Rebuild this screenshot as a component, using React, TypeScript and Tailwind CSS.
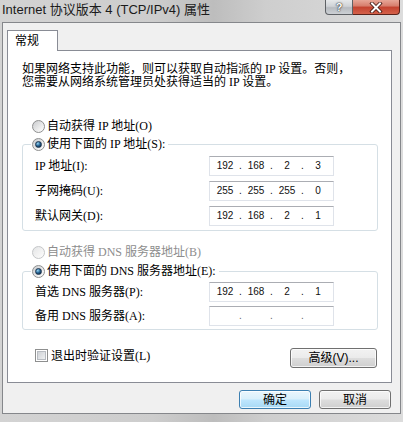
import React from "react";

const sim = "font-['Liberation_Serif','Noto_Sans_CJK_SC',serif]";
const ui = "font-['Liberation_Sans','Noto_Sans_CJK_SC',sans-serif]";

function Radio({ checked, disabled }: { checked?: boolean; disabled?: boolean }) {
  return (
    <span
      className={
        disabled
          ? "flex h-[13px] w-[13px] shrink-0 items-center justify-center rounded-full border border-[#c4c6c8] bg-[linear-gradient(135deg,#e4e5e6,#f6f6f6_70%,#ffffff)]"
          : "flex h-[13px] w-[13px] shrink-0 items-center justify-center rounded-full border border-[#8e8f8f] bg-[linear-gradient(135deg,#c9cbce,#eeeeee_65%,#ffffff)]"
      }
    >
      {checked && (
        <span className="h-[7px] w-[7px] rounded-full border border-[#1c3550] bg-[radial-gradient(circle_at_35%_30%,#9bd6f2,#2a6a9a_45%,#0d2640_85%)]" />
      )}
    </span>
  );
}

function IpBox({ v }: { v?: string[] }) {
  const vals = v ?? ["", "", "", ""];
  return (
    <div
      className={
        "flex h-[20px] w-[125px] items-center border border-[#dfe3ea] border-t-[#abadb3] bg-white pl-[2px] text-[10px] leading-[12px] " +
        ui +
        (v ? " text-[#111]" : " text-[#666]")
      }
    >
      <span className="w-[26px] text-center">{vals[0]}</span>
      <span className="w-[5px] text-center">.</span>
      <span className="w-[26px] text-center">{vals[1]}</span>
      <span className="w-[5px] text-center">.</span>
      <span className="w-[26px] text-center">{vals[2]}</span>
      <span className="w-[5px] text-center">.</span>
      <span className="w-[26px] text-center">{vals[3]}</span>
    </div>
  );
}

function Row({ label, v }: { label: string; v?: string[] }) {
  return (
    <div className="flex h-[20px] items-center">
      <span className={"w-[186px] pl-[12px] text-[12px] text-black " + sim}>{label}</span>
      <IpBox v={v} />
    </div>
  );
}

function Btn({ children, primary, w }: { children: React.ReactNode; primary?: boolean; w: string }) {
  return (
    <div
      className={
        (primary
          ? "border-[#3c7fb1] bg-[linear-gradient(#eaf6fd,#d9f0fc_48%,#bee6fd_52%,#a7d9f5)] "
          : "border-[#707070] bg-[linear-gradient(#f2f2f2,#ebebeb_48%,#dddddd_52%,#cfcfcf)] ") +
        w +
        " flex h-[19px] items-center justify-center rounded-[3px] border text-[12px] leading-[14px] text-black shadow-[inset_0_0_0_1px_rgba(255,255,255,0.75)] " +
        ui
      }
    >
      {children}
    </div>
  );
}

export default function App() {
  return (
    <div className="flex h-[422px] w-[403px] flex-col overflow-hidden bg-[linear-gradient(90deg,#d3d3d3,#cdcdcd_38%,#bdbdbd_53%,#cecece_66%,#dcdcdc)]">
      {/* title bar */}
      <div className="flex h-[22px] shrink-0 items-start justify-between">
        <div className={"pl-[2px] pt-[1px] text-[13px] leading-[18px] text-[#1b1b1b] " + ui}>
          Internet 协议版本 4 (TCP/IPv4) 属性
        </div>
        <div className="mr-[3px] flex">
          <div
            className={
              "flex h-[15px] w-[28px] items-center justify-center rounded-bl-[4px] border border-t-0 border-[#5e6165] bg-[linear-gradient(#e6e8ea,#cfd2d6_45%,#b7bbc0_55%,#cdd0d4)] text-[11px] font-bold leading-[12px] text-white [text-shadow:0_0_2px_#333,0_0_1px_#000] " +
              ui
            }
          >
            ?
          </div>
          <div className="flex h-[15px] w-[47px] items-center justify-center rounded-br-[4px] border border-l-0 border-t-0 border-[#5b231b] bg-[linear-gradient(#e7a697,#d77e6d_42%,#c44330_52%,#d4614a)]">
            <svg width="14" height="11" viewBox="0 0 14 11">
              <path d="M3 1.5 L11 9.5 M11 1.5 L3 9.5" stroke="#3b1510" strokeWidth="3.6" strokeLinecap="square" fill="none" />
              <path d="M3 1.5 L11 9.5 M11 1.5 L3 9.5" stroke="#ffffff" strokeWidth="2" strokeLinecap="square" fill="none" />
            </svg>
          </div>
        </div>
      </div>

      {/* client area */}
      <div className="mx-[2px] flex h-[392px] shrink-0 flex-col border border-[#85878b] bg-[#f0f0f0]">
        <div className="pl-[4px] pt-[7px]">
          <div className={"relative z-10 -mb-px h-[21px] w-[51px] border border-b-0 border-[#898c95] bg-white pl-[7px] pt-[2px] text-[12px] leading-[16px] text-black " + ui}>
            常规
          </div>
        </div>
        <div className="ml-[4px] flex h-[333px] w-[385px] flex-col border border-[#898c95] bg-white">
          <p className={"ml-[14px] mt-[12px] whitespace-nowrap text-[12px] leading-[13px] text-black " + sim}>
            如果网络支持此功能，则可以获取自动指派的 IP 设置。否则，
            <br />
            您需要从网络系统管理员处获得适当的 IP 设置。
          </p>

          <div className={"ml-[24px] mt-[29px] flex h-[16px] items-center gap-[2px] text-[12px] text-black " + sim}>
            <Radio />
            <span>自动获得 IP 地址(O)</span>
          </div>

          <fieldset className="ml-[14px] mt-[2px] w-[356px] rounded-[3px] border border-[#d5dfe5] pb-[4px] pt-[4px]">
            <legend className={"ml-[8px] flex h-[16px] items-center gap-[2px] px-[1px] text-[12px] text-black " + sim}>
              <Radio checked />
              <span className="pr-[2px]">使用下面的 IP 地址(S):</span>
            </legend>
            <div className="flex flex-col gap-[5px]">
              <Row label="IP 地址(I):" v={["192", "168", "2", "3"]} />
              <Row label="子网掩码(U):" v={["255", "255", "255", "0"]} />
              <Row label="默认网关(D):" v={["192", "168", "2", "1"]} />
            </div>
          </fieldset>

          <div className={"ml-[24px] mt-[13px] flex h-[16px] items-center gap-[2px] text-[12px] text-[#8d8d8d] " + sim}>
            <Radio disabled />
            <span>自动获得 DNS 服务器地址(B)</span>
          </div>

          <fieldset className="ml-[14px] mt-[3px] w-[356px] rounded-[3px] border border-[#d5dfe5] pb-[3px] pt-[3px]">
            <legend className={"ml-[8px] flex h-[16px] items-center gap-[2px] px-[1px] text-[12px] text-black " + sim}>
              <Radio checked />
              <span className="pr-[2px]">使用下面的 DNS 服务器地址(E):</span>
            </legend>
            <div className="flex flex-col gap-[4px]">
              <Row label="首选 DNS 服务器(P):" v={["192", "168", "2", "1"]} />
              <Row label="备用 DNS 服务器(A):" />
            </div>
          </fieldset>

          <div className="mt-[19px] flex items-start justify-between pr-[14px]">
            <div className={"ml-[27px] flex h-[13px] items-center gap-[3px] text-[12px] text-black " + sim}>
              <span className="flex h-[13px] w-[13px] shrink-0 items-center justify-center border border-[#8e8f8f] bg-white">
                <span className="h-[9px] w-[9px] border border-[#b8bcc2] bg-[linear-gradient(135deg,#cfd2d6,#eef0f2)]" />
              </span>
              <span>退出时验证设置(L)</span>
            </div>
            <div className="-mt-px">
              <Btn w="w-[87px] h-[20px]">高级(V)...</Btn>
            </div>
          </div>
        </div>

        <div className="mt-[7px] flex justify-end gap-[8px] pr-[9px]">
          <Btn primary w="w-[72px]">确定</Btn>
          <Btn w="w-[72px]">取消</Btn>
        </div>
      </div>
    </div>
  );
}
